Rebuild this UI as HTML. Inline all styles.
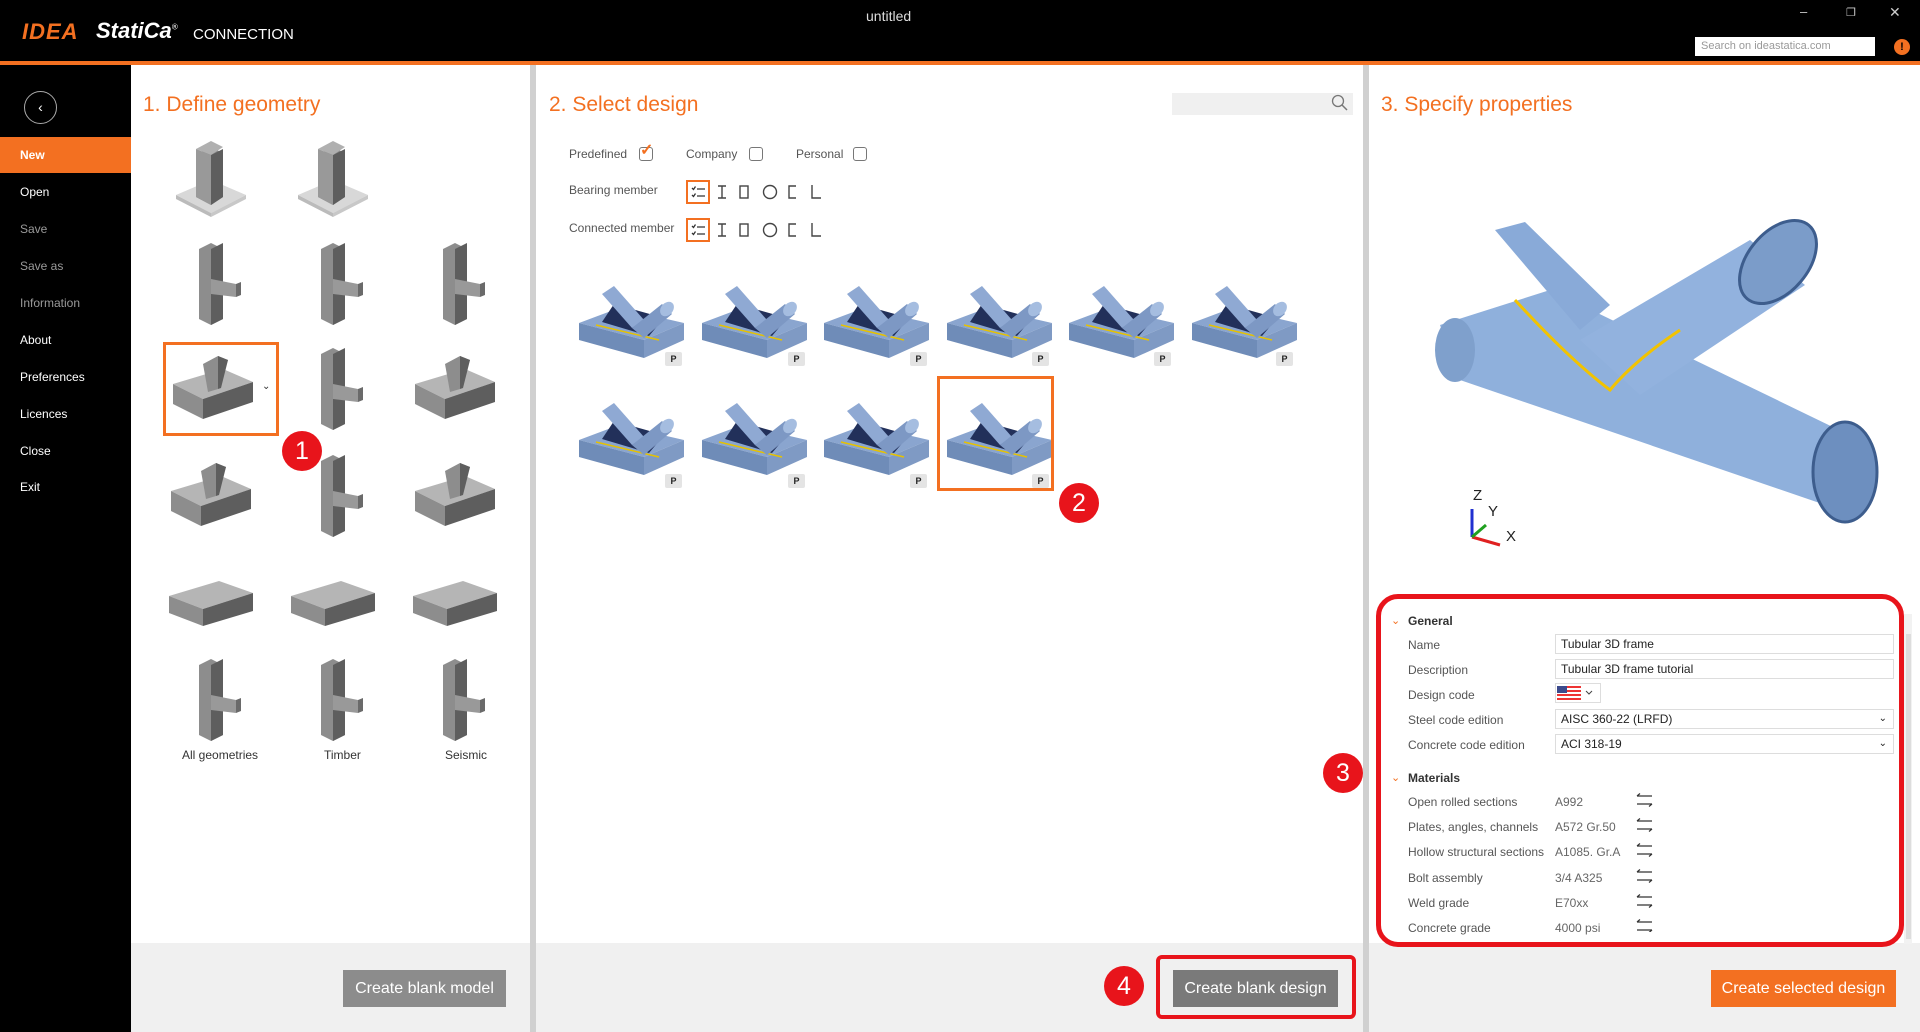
<!DOCTYPE html>
<html><head><meta charset="utf-8">
<style>
*{box-sizing:border-box;margin:0;padding:0}
body{width:1920px;height:1032px;overflow:hidden;font-family:"Liberation Sans",sans-serif;background:#fff;position:relative;color:#333}
.abs{position:absolute}
#hdr{left:0;top:0;width:1920px;height:61px;background:#000}
#ol{left:0;top:61px;width:1920px;height:4px;background:#f37021}
#side{left:0;top:65px;width:131px;height:967px;background:#000}
.mi{position:absolute;left:0;width:131px;height:36px;line-height:36px;padding-left:20px;font-size:12px;color:#fff}
.mi.dim{color:#9a9a9a}
.sep{background:#d0d0d0;top:65px;height:967px}
.foot{background:#f0f0f0;top:943px;height:89px}
.title{font-size:21px;color:#f37021}
.btn{position:absolute;color:#fff;font-size:16px;text-align:center;line-height:37px;height:37px}
.rc{position:absolute;width:40px;height:40px;border-radius:50%;background:#e8141b;color:#fff;font-size:25px;text-align:center;line-height:40px}
.lbl{position:absolute;font-size:12px;color:#555}
.cb{position:absolute;width:14px;height:14px;border:1.5px solid #777;border-radius:3px}
.pl{position:absolute;left:1408px;font-size:12px;color:#555}
.pv{position:absolute;left:1555px;width:339px;height:20px;border:1px solid #ddd;font-size:12px;line-height:18px;padding-left:5px;color:#222}
.mv{position:absolute;left:1555px;font-size:12px;color:#666}
.sw{position:absolute;left:1636px;width:16px;height:12px}
.pb{position:absolute;width:17px;height:14px;background:#e4e4e4;border-radius:2px;font-size:9px;font-weight:bold;text-align:center;line-height:14px;color:#222}
.geo{position:absolute;width:100px;height:90px}
</style></head><body>
<svg width="0" height="0" style="position:absolute">
<defs>
<symbol id="col" viewBox="0 0 100 90"><polygon points="15,60 50,45 85,60 50,78" fill="#d8d8d8"/><polygon points="15,60 50,78 50,82 15,64" fill="#bbb"/><polygon points="50,78 85,60 85,64 50,82" fill="#c8c8c8"/><polygon points="35,20 50,12 62,18 62,62 50,70 35,62" fill="#8d8d8d"/><polygon points="50,20 62,14 62,62 50,70" fill="#5e5e5e"/><polygon points="35,14 50,6 62,12 50,20" fill="#b0b0b0"/><polygon points="35,14 50,20 50,70 35,62" fill="#999"/></symbol>
<symbol id="blk" viewBox="0 0 100 90"><polygon points="10,40 60,25 90,38 40,55" fill="#b5b5b5"/><polygon points="10,40 40,55 40,75 10,60" fill="#8d8d8d"/><polygon points="40,55 90,38 90,58 40,75" fill="#5e5e5e"/><polygon points="40,20 55,12 65,16 55,45 45,48" fill="#8d8d8d"/><polygon points="55,12 65,16 58,44 55,45" fill="#5e5e5e"/></symbol>
<symbol id="vt" viewBox="0 0 100 90"><polygon points="38,10 50,4 62,10 62,80 50,86 38,80" fill="#8d8d8d"/><polygon points="50,10 62,4 62,80 50,86" fill="#5e5e5e"/><polygon points="50,40 75,45 75,58 50,55" fill="#999"/><polygon points="75,45 80,43 80,56 75,58" fill="#6a6a6a"/></symbol>
<symbol id="hz" viewBox="0 0 100 90"><polygon points="8,45 58,30 92,42 42,58" fill="#b5b5b5"/><polygon points="8,45 42,58 42,75 8,62" fill="#8d8d8d"/><polygon points="42,58 92,42 92,60 42,75" fill="#5e5e5e"/></symbol>
<symbol id="th" viewBox="0 0 110 90"><polygon points="5,45 70,62 110,45 45,30" fill="#8aa5cf"/><polygon points="5,45 70,62 70,80 5,62" fill="#6f8cb8"/><polygon points="70,62 110,45 110,62 70,80" fill="#7f9ac4"/><polygon points="28,44 75,58 90,40 40,26" fill="#22305a"/><line x1="22" y1="47" x2="85" y2="62" stroke="#e6c200" stroke-width="1.5"/><polygon points="28,16 40,8 70,42 58,50" fill="#8fa9d3"/><polygon points="58,50 88,26 98,36 70,60" fill="#7d98c4"/><ellipse cx="93" cy="31" rx="6" ry="8" fill="#a5bde0" transform="rotate(40 93 31)"/></symbol>
</defs></svg>

<div id="hdr" class="abs"></div>
<div id="ol" class="abs"></div>
<div class="abs" style="left:22px;top:19px;font-size:22px;font-weight:bold;font-style:italic;color:#f37021;letter-spacing:1px">IDEA</div>
<div class="abs" style="left:96px;top:18px;font-size:22px;font-weight:bold;font-style:italic;color:#fff">StatiCa<sup style="font-size:8px;font-weight:normal">®</sup></div>
<div class="abs" style="left:193px;top:26px;font-size:15px;color:#fff">CONNECTION</div>
<div class="abs" style="left:866px;top:8px;font-size:14px;color:#ddd">untitled</div>
<div class="abs" style="left:1800px;top:4px;font-size:13px;color:#ccc">–</div>
<div class="abs" style="left:1846px;top:6px;font-size:11px;color:#ccc">❐</div>
<div class="abs" style="left:1889px;top:4px;font-size:14px;color:#ccc">✕</div>
<div class="abs" style="left:1695px;top:37px;width:180px;height:19px;background:#fff;font-size:11px;color:#999;padding:3px 6px">Search on ideastatica.com</div>
<div class="abs" style="left:1894px;top:39px;width:16px;height:16px;border-radius:50%;background:#f37021;color:#000;font-size:11px;text-align:center;line-height:16px;font-weight:bold">!</div>

<div id="side" class="abs"></div>
<div class="abs" style="left:24px;top:91px;width:33px;height:33px;border:1.5px solid #aaa;border-radius:50%;color:#fff;text-align:center;line-height:30px;font-size:14px">‹</div>
<div class="mi" style="top:137px;background:#f37021;font-weight:bold">New</div>
<div class="mi" style="top:174px">Open</div>
<div class="mi dim" style="top:211px">Save</div>
<div class="mi dim" style="top:248px">Save as</div>
<div class="mi dim" style="top:285px">Information</div>
<div class="mi" style="top:322px">About</div>
<div class="mi" style="top:359px">Preferences</div>
<div class="mi" style="top:396px">Licences</div>
<div class="mi" style="top:433px">Close</div>
<div class="mi" style="top:469px">Exit</div>

<div class="abs sep" style="left:530px;width:6px"></div>
<div class="abs sep" style="left:1363px;width:6px"></div>
<div class="abs foot" style="left:131px;width:399px"></div>
<div class="abs foot" style="left:536px;width:827px"></div>
<div class="abs foot" style="left:1369px;width:551px"></div>

<div class="abs title" style="left:143px;top:93px">1. Define geometry</div>
<div class="abs title" style="left:549px;top:93px">2. Select design</div>
<div class="abs title" style="left:1381px;top:93px">3. Specify properties</div>

<!-- geometry grid -->
<svg class="geo" style="left:161px;top:135px"><use href="#col"/></svg>
<svg class="geo" style="left:283px;top:135px"><use href="#col"/></svg>
<svg class="geo" style="left:161px;top:239px"><use href="#vt"/></svg>
<svg class="geo" style="left:283px;top:239px"><use href="#vt"/></svg>
<svg class="geo" style="left:405px;top:239px"><use href="#vt"/></svg>
<svg class="geo" style="left:163px;top:344px"><use href="#blk"/></svg>
<svg class="geo" style="left:283px;top:344px"><use href="#vt"/></svg>
<svg class="geo" style="left:405px;top:344px"><use href="#blk"/></svg>
<svg class="geo" style="left:161px;top:451px"><use href="#blk"/></svg>
<svg class="geo" style="left:283px;top:451px"><use href="#vt"/></svg>
<svg class="geo" style="left:405px;top:451px"><use href="#blk"/></svg>
<svg class="geo" style="left:161px;top:551px"><use href="#hz"/></svg>
<svg class="geo" style="left:283px;top:551px"><use href="#hz"/></svg>
<svg class="geo" style="left:405px;top:551px"><use href="#hz"/></svg>
<svg class="geo" style="left:161px;top:655px"><use href="#vt"/></svg>
<svg class="geo" style="left:283px;top:655px"><use href="#vt"/></svg>
<svg class="geo" style="left:405px;top:655px"><use href="#vt"/></svg>
<div class="abs" style="left:163px;top:342px;width:116px;height:94px;border:3px solid #f37021"></div>
<div class="abs" style="left:262px;top:381px;font-size:10px;color:#333">⌄</div>
<div class="lbl" style="left:182px;top:748px;color:#333">All geometries</div>
<div class="lbl" style="left:324px;top:748px;color:#333">Timber</div>
<div class="lbl" style="left:445px;top:748px;color:#333">Seismic</div>
<div class="rc" style="left:282px;top:431px">1</div>
<div class="btn" style="left:343px;top:970px;width:163px;background:#8c8c8c">Create blank model</div>

<!-- select design -->
<div class="abs" style="left:1172px;top:93px;width:181px;height:22px;background:#f0f0f0"></div>
<svg class="abs" style="left:1331px;top:94px" width="18" height="18"><circle cx="7" cy="7" r="5.5" fill="none" stroke="#777" stroke-width="1.3"/><line x1="11" y1="11" x2="16" y2="16" stroke="#777" stroke-width="1.5"/></svg>
<div class="lbl" style="left:569px;top:147px">Predefined</div>
<div class="cb" style="left:639px;top:147px"></div><div class="abs" style="left:640px;top:140px;color:#f37021;font-size:16px;font-weight:bold">✓</div>
<div class="lbl" style="left:686px;top:147px">Company</div><div class="cb" style="left:749px;top:147px"></div>
<div class="lbl" style="left:796px;top:147px">Personal</div><div class="cb" style="left:853px;top:147px"></div>
<div class="lbl" style="left:569px;top:183px">Bearing member</div>
<div class="lbl" style="left:569px;top:221px">Connected member</div>
<svg class="abs" style="left:686px;top:180px" width="150" height="64">
<g id="ic"><rect x="1" y="1" width="22" height="22" fill="none" stroke="#f37021" stroke-width="2"/><path d="M6 8l1.5 1.5 2-3M6 15l1.5 1.5 2-3M11 9h8M11 16h8" stroke="#333" stroke-width="1.3" fill="none"/>
<path d="M32 6h8M36 6v12M32 18h8" stroke="#444" stroke-width="1.4" fill="none"/><rect x="54" y="6" width="8" height="12" fill="none" stroke="#444" stroke-width="1.4"/><circle cx="84" cy="12" r="6.5" fill="none" stroke="#444" stroke-width="1.4"/><path d="M110 6h-7v12h7" stroke="#444" stroke-width="1.4" fill="none"/><path d="M126 5v13h9" stroke="#444" stroke-width="1.4" fill="none"/></g>
<use href="#ic" y="38"/></svg>

<svg class="abs" style="left:574px;top:278px" width="110" height="90"><use href="#th"/></svg>
<svg class="abs" style="left:697px;top:278px" width="110" height="90"><use href="#th"/></svg>
<svg class="abs" style="left:819px;top:278px" width="110" height="90"><use href="#th"/></svg>
<svg class="abs" style="left:942px;top:278px" width="110" height="90"><use href="#th"/></svg>
<svg class="abs" style="left:1064px;top:278px" width="110" height="90"><use href="#th"/></svg>
<svg class="abs" style="left:1187px;top:278px" width="110" height="90"><use href="#th"/></svg>
<svg class="abs" style="left:574px;top:395px" width="110" height="90"><use href="#th"/></svg>
<svg class="abs" style="left:697px;top:395px" width="110" height="90"><use href="#th"/></svg>
<svg class="abs" style="left:819px;top:395px" width="110" height="90"><use href="#th"/></svg>
<svg class="abs" style="left:942px;top:395px" width="110" height="90"><use href="#th"/></svg>
<div class="pb" style="left:665px;top:352px">P</div><div class="pb" style="left:788px;top:352px">P</div><div class="pb" style="left:910px;top:352px">P</div><div class="pb" style="left:1032px;top:352px">P</div><div class="pb" style="left:1154px;top:352px">P</div><div class="pb" style="left:1276px;top:352px">P</div>
<div class="pb" style="left:665px;top:474px">P</div><div class="pb" style="left:788px;top:474px">P</div><div class="pb" style="left:910px;top:474px">P</div><div class="pb" style="left:1032px;top:474px">P</div>
<div class="abs" style="left:937px;top:376px;width:117px;height:115px;border:3px solid #f37021"></div>
<div class="rc" style="left:1059px;top:483px">2</div>
<div class="abs" style="left:1156px;top:955px;width:200px;height:64px;border:4px solid #e8141b;border-radius:6px"></div>
<div class="btn" style="left:1173px;top:970px;width:165px;background:#7a7a7a">Create blank design</div>
<div class="rc" style="left:1104px;top:966px">4</div>

<!-- 3D view -->
<svg class="abs" style="left:1420px;top:210px" width="460" height="350">
<polygon points="20,115 130,80 450,235 420,300 40,170" fill="#8fb0dc"/>
<ellipse cx="35" cy="140" rx="20" ry="32" fill="#7fa0cc"/>
<ellipse cx="425" cy="262" rx="32" ry="50" fill="#6d8fbf" stroke="#3d5d8d" stroke-width="3"/>
<polygon points="75,20 105,12 190,95 160,120" fill="#89aad8"/>
<polygon points="160,130 330,30 385,75 220,185" fill="#92b2de"/>
<ellipse cx="358" cy="52" rx="30" ry="48" fill="#7b9cc9" stroke="#3d5d8d" stroke-width="3" transform="rotate(40 358 52)"/>
<path d="M95 90 Q150 150 190 180 Q215 150 260 120" fill="none" stroke="#f2c300" stroke-width="3"/>
</svg>
<svg class="abs" style="left:1460px;top:485px" width="70" height="65">
<line x1="12" y1="52" x2="12" y2="24" stroke="#2030d0" stroke-width="3"/><line x1="12" y1="52" x2="40" y2="60" stroke="#e02020" stroke-width="3"/><line x1="12" y1="52" x2="26" y2="40" stroke="#20a020" stroke-width="3"/>
<text x="13" y="15" font-size="15" fill="#222" font-family="Liberation Sans">Z</text><text x="28" y="31" font-size="15" fill="#222" font-family="Liberation Sans">Y</text><text x="46" y="56" font-size="15" fill="#222" font-family="Liberation Sans">X</text></svg>

<!-- properties -->
<div class="abs" style="left:1904px;top:614px;width:8px;height:330px;background:#f2f2f2"></div>
<div class="abs" style="left:1906px;top:634px;width:5px;height:305px;background:#ddd"></div>
<div class="abs" style="left:1376px;top:594px;width:528px;height:353px;border:5px solid #e8141b;border-radius:22px"></div>
<div class="abs" style="left:1391px;top:614px;font-size:11px;color:#f37021">⌄</div>
<div class="abs" style="left:1408px;top:614px;font-size:12px;font-weight:bold;color:#333">General</div>
<div class="pl" style="top:638px">Name</div><div class="pv" style="top:634px">Tubular 3D frame</div>
<div class="pl" style="top:663px">Description</div><div class="pv" style="top:659px">Tubular 3D frame tutorial</div>
<div class="pl" style="top:688px">Design code</div>
<div class="abs" style="left:1555px;top:683px;width:46px;height:20px;border:1px solid #ddd"></div>
<svg class="abs" style="left:1557px;top:686px" width="42" height="14"><rect width="24" height="14" fill="#e33"/><rect y="2" width="24" height="2" fill="#fff"/><rect y="6" width="24" height="2" fill="#fff"/><rect y="10" width="24" height="2" fill="#fff"/><rect width="10" height="7" fill="#3b4a8c"/><path d="M29 5l3 3 3-3" stroke="#444" fill="none"/></svg>
<div class="pl" style="top:713px">Steel code edition</div><div class="pv" style="top:709px">AISC 360-22 (LRFD)<span style="position:absolute;right:6px;top:0;font-size:10px">⌄</span></div>
<div class="pl" style="top:738px">Concrete code edition</div><div class="pv" style="top:734px">ACI 318-19<span style="position:absolute;right:6px;top:0;font-size:10px">⌄</span></div>
<div class="abs" style="left:1391px;top:771px;font-size:11px;color:#f37021">⌄</div>
<div class="abs" style="left:1408px;top:771px;font-size:12px;font-weight:bold;color:#333">Materials</div>
<div class="pl" style="top:795px">Open rolled sections</div><div class="mv" style="top:795px">A992</div>
<div class="pl" style="top:820px">Plates, angles, channels</div><div class="mv" style="top:820px">A572 Gr.50</div>
<div class="pl" style="top:845px">Hollow structural sections</div><div class="mv" style="top:845px">A1085. Gr.A</div>
<div class="pl" style="top:871px">Bolt assembly</div><div class="mv" style="top:871px">3/4 A325</div>
<div class="pl" style="top:896px">Weld grade</div><div class="mv" style="top:896px">E70xx</div>
<div class="pl" style="top:921px">Concrete grade</div><div class="mv" style="top:921px">4000 psi</div>
<svg class="abs" style="left:1636px;top:792px" width="18" height="140"><g id="swp" stroke="#333" stroke-width="1.2" fill="none"><path d="M1 4h15M1 4l3-2.5M1 12h15M16 12l-3 2.5"/></g><use href="#swp" y="25"/><use href="#swp" y="50"/><use href="#swp" y="76"/><use href="#swp" y="101"/><use href="#swp" y="126"/></svg>
<div class="rc" style="left:1323px;top:753px">3</div>
<div class="btn" style="left:1711px;top:970px;width:185px;background:#f37021">Create selected design</div>
</body></html>
